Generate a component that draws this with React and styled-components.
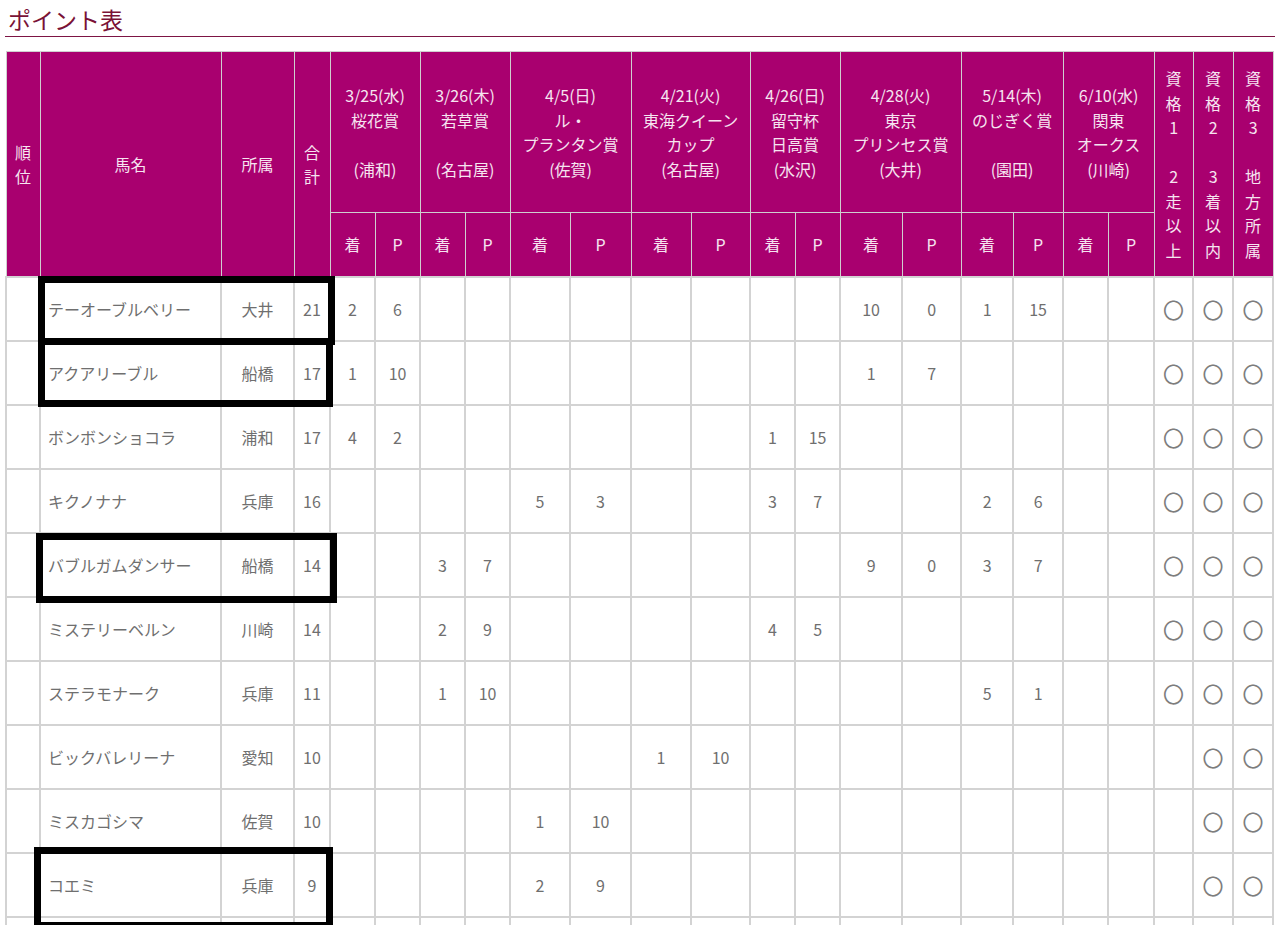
import styled, { createGlobalStyle } from "styled-components";

const GlobalStyle = createGlobalStyle`
  body {
    margin: 0;
    background: #fff;
    font-family: "Noto Sans CJK JP", "Noto Sans", sans-serif;
  }
`;

const Page = styled.div`
  position: relative;
  padding: 0 5px;
  width: 1270px;
`;

const Title = styled.h2`
  margin: 0 0 14px 0;
  padding: 3px 0 0 3px;
  height: 33px;
  line-height: 33px;
  font-size: 23px;
  font-weight: normal;
  color: #7a1236;
  border-bottom: 1px solid #7d1444;
  font-family: "Noto Sans CJK JP", serif;
`;

const Table = styled.table`
  width: 1267px;
  table-layout: fixed;
  border-collapse: collapse;
  font-size: 16px;
`;

const HeadCell = styled.th`
  height: ${({ $h }) => $h}px;
  padding: 0;
  background: #a9006f;
  color: #f6e4f0;
  font-weight: normal;
  line-height: 24.5px;
  text-align: center;
  vertical-align: middle;
  border: 1.5px solid #cfcfcf;
  white-space: nowrap;
`;

const Line = styled.div`
  height: 24.5px;
`;

const Row = styled.tr`
  height: 64px;
`;

const Cell = styled.td`
  padding: 0;
  border: 2px solid #d3d3d3;
  color: #6f6f6f;
  text-align: ${({ $left }) => ($left ? "left" : "center")};
  padding-left: ${({ $left }) => ($left ? "7px" : "0")};
  vertical-align: middle;
  white-space: nowrap;
`;

const Mark = styled.span`
  font-size: 21px;
  color: #7d7d7d;
`;

const Highlight = styled.div`
  position: absolute;
  box-sizing: border-box;
  border: 7px solid #000;
  pointer-events: none;
`;

const widths = [34, 181, 73, 36, 45, 45, 45, 45, 60, 61, 60, 59, 45, 45, 62, 59, 52, 50, 45, 46, 39, 40, 40];

const races = [
  ["3/25(水)", "桜花賞", "", "(浦和)"],
  ["3/26(木)", "若草賞", "", "(名古屋)"],
  ["4/5(日)", "ル・", "プランタン賞", "(佐賀)"],
  ["4/21(火)", "東海クイーン", "カップ", "(名古屋)"],
  ["4/26(日)", "留守杯", "日高賞", "(水沢)"],
  ["4/28(火)", "東京", "プリンセス賞", "(大井)"],
  ["5/14(木)", "のじぎく賞", "", "(園田)"],
  ["6/10(水)", "関東", "オークス", "(川崎)"],
];

const quals = [
  ["資", "格", "1", "", "2", "走", "以", "上"],
  ["資", "格", "2", "", "3", "着", "以", "内"],
  ["資", "格", "3", "", "地", "方", "所", "属"],
];

// pts: race index -> [着, P]
const horses = [
  { name: "テーオーブルベリー", area: "大井", total: 21, pts: { 0: [2, 6], 5: [10, 0], 6: [1, 15] }, q: [1, 1, 1] },
  { name: "アクアリーブル", area: "船橋", total: 17, pts: { 0: [1, 10], 5: [1, 7] }, q: [1, 1, 1] },
  { name: "ボンボンショコラ", area: "浦和", total: 17, pts: { 0: [4, 2], 4: [1, 15] }, q: [1, 1, 1] },
  { name: "キクノナナ", area: "兵庫", total: 16, pts: { 2: [5, 3], 4: [3, 7], 6: [2, 6] }, q: [1, 1, 1] },
  { name: "バブルガムダンサー", area: "船橋", total: 14, pts: { 1: [3, 7], 5: [9, 0], 6: [3, 7] }, q: [1, 1, 1] },
  { name: "ミステリーベルン", area: "川崎", total: 14, pts: { 1: [2, 9], 4: [4, 5] }, q: [1, 1, 1] },
  { name: "ステラモナーク", area: "兵庫", total: 11, pts: { 1: [1, 10], 6: [5, 1] }, q: [1, 1, 1] },
  { name: "ビックバレリーナ", area: "愛知", total: 10, pts: { 3: [1, 10] }, q: [0, 1, 1] },
  { name: "ミスカゴシマ", area: "佐賀", total: 10, pts: { 2: [1, 10] }, q: [0, 1, 1] },
  { name: "コエミ", area: "兵庫", total: 9, pts: { 2: [2, 9] }, q: [0, 1, 1] },
  { name: "", area: "", total: "", pts: {}, q: [0, 0, 0] },
];

const boxes = [
  { left: 38, top: 276, width: 297, height: 69 },
  { left: 38, top: 338, width: 295, height: 69 },
  { left: 36, top: 533, width: 301, height: 70 },
  { left: 34, top: 847, width: 299, height: 82 },
];

const Lines = ({ lines }) => lines.map((l, i) => <Line key={i}>{l}</Line>);

const App = () => {
  return (
    <Page>
      <GlobalStyle />
      <Title>ポイント表</Title>
      <Table>
        <colgroup>
          {widths.map((w, i) => (
            <col key={i} style={{ width: w }} />
          ))}
        </colgroup>
        <thead>
          <tr>
            <HeadCell $h={160} rowSpan={2}>
              <Lines lines={["順", "位"]} />
            </HeadCell>
            <HeadCell $h={160} rowSpan={2}>馬名</HeadCell>
            <HeadCell $h={160} rowSpan={2}>所属</HeadCell>
            <HeadCell $h={160} rowSpan={2}>
              <Lines lines={["合", "計"]} />
            </HeadCell>
            {races.map((r, i) => (
              <HeadCell $h={160} colSpan={2} key={i}>
                <Lines lines={r} />
              </HeadCell>
            ))}
            {quals.map((q, i) => (
              <HeadCell $h={160} rowSpan={2} key={"q" + i}>
                <Lines lines={q} />
              </HeadCell>
            ))}
          </tr>
          <tr>
            {races.map((r, i) => [
              <HeadCell $h={63} key={"a" + i}>着</HeadCell>,
              <HeadCell $h={63} key={"p" + i}>P</HeadCell>,
            ])}
          </tr>
        </thead>
        <tbody>
          {horses.map((h, i) => (
            <Row key={i}>
              <Cell />
              <Cell $left>{h.name}</Cell>
              <Cell>{h.area}</Cell>
              <Cell>{h.total}</Cell>
              {races.map((r, j) => {
                const p = h.pts[j];
                return [
                  <Cell key={"a" + j}>{p ? p[0] : ""}</Cell>,
                  <Cell key={"p" + j}>{p ? p[1] : ""}</Cell>,
                ];
              })}
              {h.q.map((v, j) => (
                <Cell key={"q" + j}>{v ? <Mark>〇</Mark> : ""}</Cell>
              ))}
            </Row>
          ))}
        </tbody>
      </Table>
      {boxes.map((b, i) => (
        <Highlight key={i} style={{ left: b.left, top: b.top, width: b.width, height: b.height }} />
      ))}
    </Page>
  );
};

export default App;
